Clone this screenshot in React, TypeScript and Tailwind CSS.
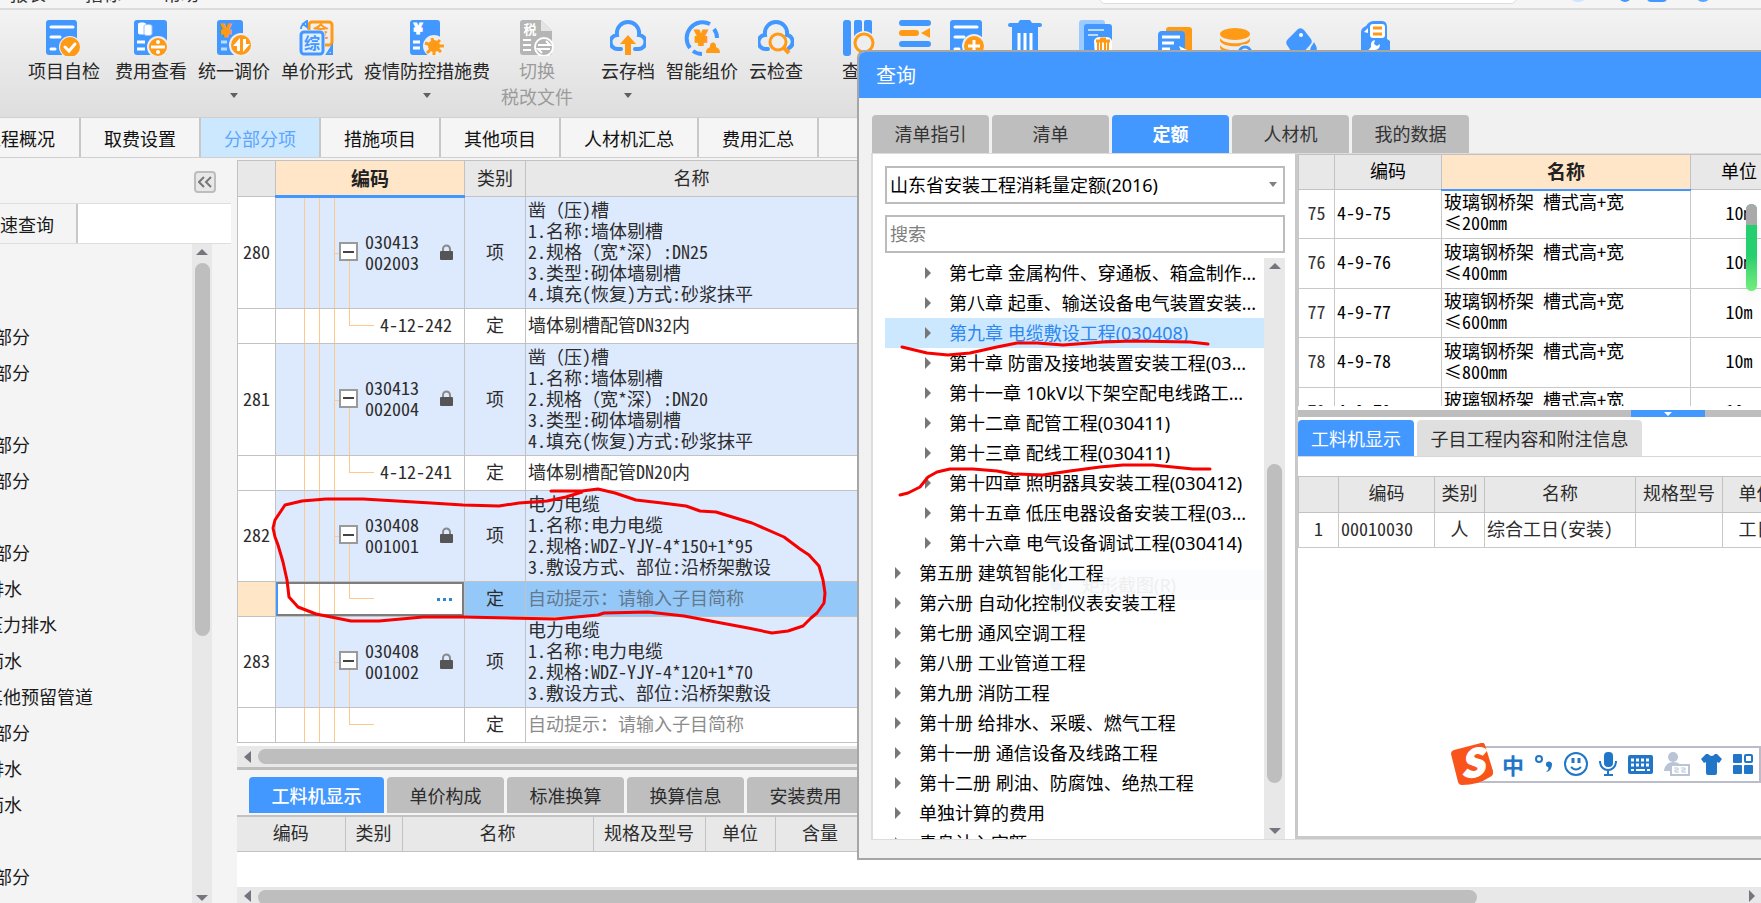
import type { ReactNode } from 'react';

const MONO = "font-['Noto_Sans_Mono_CJK_SC','Noto_Sans_CJK_SC',monospace]";

/* ---------- toolbar icons ---------- */

function Icon({ children }: { children: ReactNode }) {
  return (
    <svg width="36" height="36" viewBox="0 0 36 36" fill="none" className="shrink-0" aria-hidden="true">
      {children}
    </svg>
  );
}

const icons: Record<string, ReactNode> = {
  check: (
    <Icon>
      <rect width="31" height="35" rx="3" fill="#4398ff" />
      <path d="M5 7h22M5 17h9M5 29h4" stroke="#fff" strokeWidth="3" strokeLinecap="round" />
      <circle cx="24" cy="27" r="11" fill="#eee" />
      <circle cx="24" cy="27" r="10" fill="#ff9a17" />
      <path d="M19 27l4 4 6-7" stroke="#fff" strokeWidth="3" strokeLinecap="round" />
    </Icon>
  ),
  fee: (
    <Icon>
      <rect x="1" width="33" height="35" rx="3" fill="#4398ff" />
      <path d="M5 4c0-2 8-2 8 0v9c0 2-8 2-8 0z" fill="#fff" />
      <path d="M11 6c0-2 8-2 8 0v8c0 2-8 2-8 0z" fill="#fff" stroke="#8fc2ff" />
      <path d="M4 22h8M4 29h8" stroke="#fff" strokeWidth="3" />
      <circle cx="25" cy="27" r="11" fill="#eee" />
      <circle cx="25" cy="27" r="9" fill="#ff9a17" />
      <path d="M18 27h14" stroke="#fff" strokeWidth="3" />
      <circle cx="25" cy="22" r="2" fill="#fff" />
      <circle cx="25" cy="32" r="2" fill="#fff" />
    </Icon>
  ),
  adjust: (
    <Icon>
      <rect x="1" width="26" height="35" rx="3" fill="#4398ff" />
      <text x="10" y="17" fontSize="18" fontWeight="900" textAnchor="middle" fill="#ff9a17" stroke="#ff9a17">¥</text>
      <path d="M5 22h6M5 29h6" stroke="#bddbff" strokeWidth="3" />
      <circle cx="25" cy="25" r="12" fill="#eee" />
      <circle cx="25" cy="25" r="10" fill="#ff9a17" />
      <path d="M24 18v13h-3v-5h-4zM27 32V19h3v5h4z" fill="#fff" />
    </Icon>
  ),
  form: (
    <Icon>
      <rect x="10" y="2" width="23" height="23" rx="3" stroke="#ff9a17" strokeWidth="3" />
      <text x="22" y="17" fontSize="16" fontWeight="700" textAnchor="middle" fill="#ff9a17">金</text>
      <rect x="0" y="10" width="26" height="26" rx="4" fill="#eee" />
      <rect x="2" y="12" width="22" height="22" rx="3" stroke="#4398ff" strokeWidth="3" fill="#e3efff" />
      <text x="13" y="29" fontSize="16" fontWeight="700" textAnchor="middle" fill="#4398ff">综</text>
      <path d="M2 9c0-3 2-5 4-5M8 1v6l-4-3zM33 27c0 3-2 5-4 5M33 26v8h-5z" stroke="#4398ff" strokeWidth="2" />
    </Icon>
  ),
  virus: (
    <Icon>
      <rect x="1" width="30" height="35" rx="3" fill="#4398ff" />
      <text x="9" y="14" fontSize="15" fontWeight="900" textAnchor="middle" fill="#fff" stroke="#fff">¥</text>
      <path d="M4 22h7M4 28h7" stroke="#fff" strokeWidth="3" />
      <circle cx="25" cy="26" r="11" fill="#eee" />
      <circle cx="25" cy="26" r="6" fill="#ff9a17" />
      <path d="M25 26l-2-8M25 26l6-6M25 26h10M25 26l7 6M25 26v9M25 26l-7 7M25 26l-9-3" stroke="#ff9a17" strokeWidth="3" />
    </Icon>
  ),
  tax: (
    <Icon>
      <path d="M4 0h18l11 11v22a2 2 0 0 1-2 2H4a3 3 0 0 1-3-3V3a3 3 0 0 1 3-3z" fill="#b5b5b5" />
      <path d="M22 0l11 11H22z" fill="#e4e4e4" />
      <text x="11" y="14" fontSize="13" fontWeight="700" textAnchor="middle" fill="#fff">税</text>
      <path d="M4 20h8M4 25h8M4 30h8" stroke="#fff" strokeWidth="2" />
      <circle cx="25" cy="27" r="9" fill="#b5b5b5" stroke="#fff" strokeWidth="2" />
      <path d="M19 25h12l-4-4M31 29H19l4 4" stroke="#fff" strokeWidth="2" />
    </Icon>
  ),
  upload: (
    <Icon>
      <path d="M11 29H8a7 7 0 0 1-1-14C6 7 12 2 18 2s12 5 11 13a7 7 0 0 1-1 14h-3" stroke="#4398ff" strokeWidth="4" strokeLinecap="round" />
      <path d="M18 15l8 9h-5v11h-6V24h-5z" fill="#ff9a17" />
    </Icon>
  ),
  smart: (
    <Icon>
      <path d="M6 28A16 16 0 0 1 26 4M30 9a15 15 0 0 1 3 9M9 31a15 15 0 0 0 9 3" stroke="#4398ff" strokeWidth="4" />
      <text x="17" y="25" fontSize="20" fontWeight="900" textAnchor="middle" fill="#ff9a17" stroke="#ff9a17" strokeWidth="2">¥</text>
      <path d="M22 33c0-5 3-5 4-6-1-6 7-6 6 0 1 1 4 1 4 6z" fill="#ff9a17" />
    </Icon>
  ),
  cloudsearch: (
    <Icon>
      <path d="M10 29H8a7 7 0 0 1-1-14C6 7 12 2 18 2s12 5 11 13a7 7 0 0 1 2 13" stroke="#4398ff" strokeWidth="4" strokeLinecap="round" />
      <circle cx="20" cy="22" r="8" fill="#eee" stroke="#ff9a17" strokeWidth="3" />
      <path d="M25 27l6 6" stroke="#ff9a17" strokeWidth="4" />
    </Icon>
  ),
  books: (
    <Icon>
      <rect x="1" width="8" height="36" rx="3" fill="#4398ff" />
      <rect x="12" width="8" height="30" rx="2" fill="#4398ff" />
      <rect x="22" width="8" height="26" rx="2" fill="#4398ff" />
      <circle cx="22" cy="23" r="12" fill="#eee" />
      <circle cx="22" cy="23" r="9" stroke="#ff9a17" strokeWidth="3" />
    </Icon>
  ),
  indent: (
    <Icon>
      <path d="M5 3h26M5 24h26" stroke="#4398ff" strokeWidth="6" strokeLinecap="round" />
      <path d="M5 13h14" stroke="#ff9a17" strokeWidth="6" strokeLinecap="round" />
      <path d="M24 13l9-5v10z" fill="#ff9a17" />
    </Icon>
  ),
  add: (
    <Icon>
      <rect x="1" width="32" height="35" rx="3" fill="#4398ff" />
      <path d="M6 7h22M6 17h9M6 29h4" stroke="#fff" strokeWidth="3" strokeLinecap="round" />
      <circle cx="25" cy="26" r="12" fill="#eee" />
      <circle cx="25" cy="26" r="10" fill="#ff9a17" />
      <path d="M25 20v12M19 26h12" stroke="#fff" strokeWidth="3" />
    </Icon>
  ),
  trash: (
    <Icon>
      <path d="M13 0h10l2 3h8a2 2 0 0 1 0 4H3a2 2 0 0 1 0-4h8zM5 7h26v26a3 3 0 0 1-3 3H8a3 3 0 0 1-3-3z" fill="#4398ff" />
      <path d="M12 13v18M18 13v18M24 13v18" stroke="#fff" strokeWidth="3" />
    </Icon>
  ),
  copydel: (
    <Icon>
      <rect x="1" width="26" height="34" rx="3" fill="#9ccbff" />
      <rect x="6" y="4" width="28" height="32" rx="3" fill="#4398ff" />
      <path d="M10 10h16M10 15h10" stroke="#bddbff" strokeWidth="2" />
      <path d="M16 21q1-4 6-4h6q5 0 6 4v15H17z" fill="#fff" />
      <path d="M18 21h14M22 19h6" stroke="#ff9a17" strokeWidth="3" />
      <path d="M20 22v14M23 22v14M27 22v14M30 22v14" stroke="#ff9a17" strokeWidth="2" />
    </Icon>
  ),
  copy: (
    <Icon>
      <rect x="9" y="7" width="26" height="28" rx="3" fill="#ff9a17" />
      <rect x="1" y="11" width="27" height="25" rx="4" fill="#4398ff" />
      <path d="M5 17h18M5 23h12M5 29h8" stroke="#fff" strokeWidth="3" />
      <path d="M22 26l8 4-4 6z" fill="#fff" />
    </Icon>
  ),
  coins: (
    <Icon>
      <ellipse cx="17" cy="14" rx="15" ry="6" fill="#ff9a17" />
      <path d="M2 18c3 7 27 7 30 0v3c-3 7-27 7-30 0zM2 25c3 7 27 7 30 0v3c-3 7-27 7-30 0z" fill="#ff9a17" />
      <circle cx="27" cy="33" r="9" fill="#eee" />
      <circle cx="27" cy="33" r="6" stroke="#4398ff" strokeWidth="3" />
    </Icon>
  ),
  bucket: (
    <Icon>
      <path d="M5 19L15 9q3-2 6 1l7 9q2 3-1 6l-8 9H10L4 25q-2-3 1-6z" fill="#4398ff" />
      <circle cx="18" cy="15" r="2" fill="#fff" />
      <path d="M31 22c2 4 4 6 2 10h-5c-2-4 1-6 3-10z" fill="#4398ff" />
    </Icon>
  ),
  wrench: (
    <Icon>
      <path d="M3 12q0-4 5-6 3-5 8-5h8q5 0 5 6v12l3 2v16H3z" fill="#4398ff" />
      <rect x="12" y="4" width="15" height="14" rx="3" fill="#fff" />
      <path d="M15 8h9M15 14h9" stroke="#ff9a17" strokeWidth="3" />
      <path d="M7 34l6-7q-1-6 4-7l-1 4 3 2 3-2q0 6-6 6l-5 6z" fill="#fff" />
      <path d="M6 12l4-4v5z" fill="#fff" />
    </Icon>
  ),
};

type Tool = { icon: string; label: string; sub?: string; arrow?: boolean; off?: boolean };

const toolGroups: { cls: string; tools: Tool[] }[] = [
  { cls: 'ml-7', tools: [{ icon: 'check', label: '项目自检' }] },
  {
    cls: 'ml-[15px]',
    tools: [
      { icon: 'fee', label: '费用查看' },
      { icon: 'adjust', label: '统一调价', arrow: true },
      { icon: 'form', label: '单价形式' },
      { icon: 'virus', label: '疫情防控措施费', arrow: true },
      { icon: 'tax', label: '切换', sub: '税改文件', off: true },
    ],
  },
  {
    cls: 'ml-7',
    tools: [
      { icon: 'upload', label: '云存档', arrow: true },
      { icon: 'smart', label: '智能组价' },
      { icon: 'cloudsearch', label: '云检查' },
    ],
  },
  { cls: 'ml-[39px]', tools: [{ icon: 'books', label: '查询' }] },
];

const iconTools = [
  { icon: 'indent', name: '插入', cls: 'w-[52px]' },
  { icon: 'add', name: '补充', cls: 'w-[52px]' },
  { icon: 'trash', name: '删除', cls: 'w-16' },
  { icon: 'copydel', name: '清除', cls: 'w-[78px]' },
  { icon: 'copy', name: '复用', cls: 'w-20' },
  { icon: 'coins', name: '价格', cls: 'w-[42px]' },
  { icon: 'bucket', name: '颜色', cls: 'w-[88px]' },
  { icon: 'wrench', name: '工具', cls: 'w-[62px]' },
];

function Toolbar() {
  return (
    <div className="flex h-[109px] shrink-0 items-start overflow-hidden border-t-2 border-[#dcdcdc] bg-gradient-to-b from-[#f3f3f3] to-[#dedede] pt-[10px]">
      {toolGroups.map((g) => (
        <div key={g.tools[0].label} className={`flex shrink-0 gap-[11px] ${g.cls}`}>
          {g.tools.map((t) => (
            <button
              key={t.label}
              type="button"
              className={`flex flex-col items-center whitespace-nowrap text-lg leading-[26px] ${t.off ? 'text-[#9b9b9b]' : 'text-[#262626]'}`}
            >
              {icons[t.icon]}
              <span className="mt-px">{t.label}</span>
              {t.sub && <span>{t.sub}</span>}
              {t.arrow && <span className="mt-[10px] border-x-4 border-t-[5px] border-x-transparent border-t-[#606060]" />}
            </button>
          ))}
        </div>
      ))}
      <div className="ml-[11px] flex">
        {iconTools.map((t) => (
          <button key={t.icon} type="button" aria-label={t.name} className={`flex justify-center ${t.cls}`}>
            {icons[t.icon]}
          </button>
        ))}
      </div>
    </div>
  );
}

/* ---------- top strip and page tabs ---------- */

function TopStrip() {
  return (
    <div className="flex h-2 shrink-0 items-end overflow-hidden bg-[#f5f5f5] text-lg leading-[18px] text-[#333]">
      <span className="ml-[10px] pb-[6px]">报表</span>
      <span className="ml-[39px] pb-[6px]">指标</span>
      <span className="ml-[42px] pb-[6px]">帮助</span>
      <div className="mb-1 ml-[900px] flex h-8 w-[418px] shrink-0 items-end rounded-md border border-[#ddd] bg-white pl-7">
        <input
          aria-label="功能搜索"
          placeholder="请输入功能名称进行搜索"
          className="w-full bg-transparent leading-[18px] outline-none placeholder:text-[#999]"
        />
      </div>
      <div className="ml-[52px] flex items-end gap-4 pb-[6px]">
        <span className="h-4 w-[18px] rounded-full bg-[#cfe4ff]" />
        <span className="ml-4 h-4 w-3 rounded-full bg-[#4398ff]" />
        <span className="h-4 w-5 rounded bg-[#4398ff]" />
        <span className="ml-3 h-4 w-4 rounded-full bg-[#5aa5ff]" />
      </div>
    </div>
  );
}

const pageTabs = [
  { t: '取费设置', w: 'w-[120px]' },
  { t: '分部分项', w: 'w-[120px]' },
  { t: '措施项目', w: 'w-[120px]' },
  { t: '其他项目', w: 'w-[120px]' },
  { t: '人材机汇总', w: 'w-[138px]' },
  { t: '费用汇总', w: 'w-[120px]' },
];

function PageTabs() {
  return (
    <div className="flex h-[41px] shrink-0 border-y border-[#cfcfcf] bg-[#f5f5f5] text-lg text-[#111]">
      <button type="button" className="flex w-[81px] items-center justify-end overflow-hidden whitespace-nowrap border-r-2 border-[#c8c8c8] pr-6">
        工程概况
      </button>
      {pageTabs.map(({ t, w }) => (
        <button
          key={t}
          type="button"
          className={`${w} border-r-2 border-[#c8c8c8] ${t === '分部分项' ? 'bg-[#cce8ff] text-[#5ca6ff]' : ''}`}
        >
          {t}
        </button>
      ))}
    </div>
  );
}

/* ---------- left tree ---------- */

const sideItems = [
  ['', 'w-0'],
  ['', 'w-0'],
  ['部分', 'w-[30px]'],
  ['部分', 'w-[30px]'],
  ['', 'w-0'],
  ['部分', 'w-[30px]'],
  ['部分', 'w-[30px]'],
  ['', 'w-0'],
  ['部分', 'w-[30px]'],
  ['排水', 'w-[22px]'],
  ['压力排水', 'w-[57px]'],
  ['雨水', 'w-[22px]'],
  ['其他预留管道', 'w-[93px]'],
  ['部分', 'w-[30px]'],
  ['排水', 'w-[22px]'],
  ['雨水', 'w-[22px]'],
  ['', 'w-0'],
  ['部分', 'w-[30px]'],
];

function SidePanel() {
  return (
    <aside className="flex w-[231px] shrink-0 flex-col bg-[#f4f4f4] text-lg text-[#1a1a1a]">
      <div className="flex h-11 shrink-0 items-center justify-end border-b border-[#dedede] pr-[15px]">
        <button type="button" aria-label="收起" className="flex h-[22px] w-[22px] items-center justify-center rounded border-2 border-[#bdbdbd] bg-[#e8e8e8]">
          <svg width="14" height="12" viewBox="0 0 14 12" fill="none" stroke="#777" strokeWidth="2">
            <path d="M6 1L1 6l5 5M13 1L8 6l5 5" />
          </svg>
        </button>
      </div>
      <div className="flex h-10 shrink-0 border-b border-[#dedede] bg-white">
        <button type="button" className="flex w-[78px] items-center justify-end overflow-hidden whitespace-nowrap border-r-2 border-[#c8c8c8] bg-[#f4f4f4] pr-[22px]">
          快速查询
        </button>
      </div>
      <div className="flex min-h-0 flex-1 justify-between">
        <div className="overflow-hidden pt-[2px]">
          {sideItems.map(([t, w], i) => (
            <div key={i} className={`flex h-9 items-center justify-end overflow-hidden whitespace-nowrap ${w}`}>
              {t}
            </div>
          ))}
        </div>
        <div className="mr-[19px] flex w-5 flex-col items-center bg-[#e8e8e8] pt-[5px]">
          <span className="border-x-[6px] border-b-[6px] border-x-transparent border-b-[#75757f]" />
          <span className="mt-2 h-[373px] w-[15px] rounded-full bg-[#bebebe]" />
          <span className="mb-[2px] mt-auto border-x-[6px] border-t-[6px] border-x-transparent border-t-[#75757f]" />
        </div>
      </div>
    </aside>
  );
}

/* ---------- main bill grid ---------- */

type Bill = { no: string; code: [string, string]; lines: string[]; child?: string; childName?: string; active?: boolean };

const bills: Bill[] = [
  {
    no: '280',
    code: ['030413', '002003'],
    lines: ['凿（压)槽', '1.名称:墙体剔槽', '2.规格（宽*深）:DN25', '3.类型:砌体墙剔槽', '4.填充(恢复)方式:砂浆抹平'],
    child: '4-12-242',
    childName: '墙体剔槽配管DN32内',
  },
  {
    no: '281',
    code: ['030413', '002004'],
    lines: ['凿（压)槽', '1.名称:墙体剔槽', '2.规格（宽*深）:DN20', '3.类型:砌体墙剔槽', '4.填充(恢复)方式:砂浆抹平'],
    child: '4-12-241',
    childName: '墙体剔槽配管DN20内',
  },
  {
    no: '282',
    code: ['030408', '001001'],
    lines: ['电力电缆', '1.名称:电力电缆', '2.规格:WDZ-YJY-4*150+1*95', '3.敷设方式、部位:沿桥架敷设'],
    active: true,
  },
  {
    no: '283',
    code: ['030408', '001002'],
    lines: ['电力电缆', '1.名称:电力电缆', '2.规格:WDZ-YJY-4*120+1*70', '3.敷设方式、部位:沿桥架敷设'],
  },
];

function Guides() {
  return (
    <>
      <span className="absolute inset-y-0 left-7 w-px bg-[#fcc98f]" />
      <span className="absolute inset-y-0 left-[43px] w-px bg-[#fcc98f]" />
      <span className="absolute inset-y-0 left-[58px] w-px bg-[#fcc98f]" />
    </>
  );
}

function Lock() {
  return (
    <svg width="13" height="16" viewBox="0 0 13 16" fill="none" className="ml-auto">
      <path d="M3 8V5a3 3 0 0 1 7 0V8" stroke="#8a8a8a" strokeWidth="2" />
      <rect y="7" width="13" height="9" rx="1" fill="#555" />
    </svg>
  );
}

function BillRows({ b }: { b: Bill }) {
  const cell = 'border border-[#c2c2c2] pb-[3px]';
  return (
    <>
      <tr className={b.lines.length === 5 ? 'h-28' : 'h-[91px]'}>
        <td className={`${cell} bg-white text-center`}>{b.no}</td>
        <td className={`${cell} relative bg-[#dde9fd]`}>
          <Guides />
          <span className="absolute left-[58px] top-1/2 h-px w-[6px] bg-[#fcc98f]" />
          <span className="absolute bottom-0 left-[73px] top-1/2 w-px bg-[#fcc98f]" />
          <div className="relative flex items-center pl-[63px] pr-[11px]">
            <button type="button" aria-label="折叠" className="flex h-[19px] w-[19px] items-center justify-center border-2 border-[#9a9a9a] bg-white">
              <span className="h-[2px] w-[11px] bg-[#444]" />
            </button>
            <span className="ml-[7px]">
              {b.code[0]}
              <br />
              {b.code[1]}
            </span>
            <Lock />
          </div>
        </td>
        <td className={`${cell} bg-[#dde9fd] text-center`}>项</td>
        <td className={`${cell} whitespace-nowrap bg-[#dde9fd] pl-[2px]`}>
          {b.lines.map((l) => (
            <div key={l}>{l}</div>
          ))}
        </td>
      </tr>
      <tr className="h-[35px]">
        <td className={`${cell} ${b.active ? 'bg-[#ffe6c6]' : 'bg-white'}`} />
        <td className={`${cell} relative bg-white`}>
          <Guides />
          <span className="absolute left-[73px] top-0 h-1/2 w-[25px] border-b border-l border-[#fcc98f]" />
          {b.active && (
            <span className="absolute inset-0 border-2 border-[#7d7d7d] border-l-[#4398ff]">
              <button type="button" aria-label="选择子目" className="absolute inset-y-0 right-[10px] flex items-center gap-[3px]">
                <i className="h-[3px] w-[3px] bg-[#2f86d8]" />
                <i className="h-[3px] w-[3px] bg-[#2f86d8]" />
                <i className="h-[3px] w-[3px] bg-[#2f86d8]" />
              </button>
            </span>
          )}
          {b.child && <div className="relative pl-[104px]">{b.child}</div>}
        </td>
        <td className={`${cell} text-center ${b.active ? 'bg-[#93c8f8]' : 'bg-white'}`}>定</td>
        <td className={`${cell} whitespace-nowrap pl-[2px] ${b.active ? 'bg-[#93c8f8] text-[#63798f]' : b.childName ? 'bg-white' : 'bg-white text-[#8c8c8c]'}`}>
          {b.childName ?? '自动提示：请输入子目简称'}
        </td>
      </tr>
    </>
  );
}

function BillGrid() {
  const th = 'border border-[#c2c2c2] bg-[#e8e8e8] pb-[3px] font-normal';
  return (
    <div className="h-[586px] shrink-0 overflow-hidden bg-white">
      <table className={`w-[621px] table-fixed border-collapse text-lg leading-[21px] text-[#2c2c2c] ${MONO}`}>
        <colgroup>
          <col className="w-[38px]" />
          <col className="w-[189px]" />
          <col className="w-[61px]" />
          <col />
        </colgroup>
        <thead>
          <tr className="h-9">
            <th className={th} aria-label="序号" />
            <th className="border border-b-[3px] border-[#c2c2c2] border-b-[#4398ff] bg-[#ffe6c8] pb-[2px] text-[19px] font-bold text-[#222]">编码</th>
            <th className={th}>类别</th>
            <th className={th}>名称</th>
          </tr>
        </thead>
        <tbody>
          {bills.map((b) => (
            <BillRows key={b.no} b={b} />
          ))}
        </tbody>
      </table>
    </div>
  );
}

function LeftArrow() {
  return <span className="mx-[7px] border-y-[6px] border-r-[7px] border-y-transparent border-r-[#75757f]" />;
}

const detailCols = [
  ['编码', 'w-[108px]'],
  ['类别', 'w-[57px]'],
  ['名称', 'w-[191px]'],
  ['规格及型号', 'w-28'],
  ['单位', 'w-[70px]'],
  ['含量', 'w-[90px]'],
];

function MainArea() {
  return (
    <main className="ml-[6px] flex min-w-0 flex-1 flex-col bg-white">
      <BillGrid />
      <div className="flex h-[21px] shrink-0 items-center bg-[#e8e8e8]">
        <LeftArrow />
        <span className="h-[15px] flex-1 rounded-l-full bg-[#bebebe]" />
      </div>
      <div className="h-[3px] shrink-0 bg-[#bebebe]" />
      <div className="flex h-[45px] shrink-0 items-start gap-[3px] bg-[#f4f4f4] pl-3 pt-[7px] text-lg text-[#2c2c2c]">
        <button type="button" className="h-9 w-[135px] rounded-t bg-[#4398ff] font-medium text-white">工料机显示</button>
        {['单价构成', '标准换算', '换算信息', '安装费用'].map((t) => (
          <button key={t} type="button" className="h-9 w-[117px] rounded-t bg-[#bebebe]">
            {t}
          </button>
        ))}
      </div>
      <table className="w-[628px] shrink-0 table-fixed border-collapse text-lg text-[#2c2c2c]">
        <thead>
          <tr className="h-[35px]">
            {detailCols.map(([t, w]) => (
              <th key={t} className={`${w} whitespace-nowrap border border-l-0 border-t-2 border-[#c2c2c2] bg-[#e8e8e8] pb-[3px] font-normal leading-6`}>
                {t}
              </th>
            ))}
          </tr>
        </thead>
      </table>
      <div className="flex-1" />
      <div className="flex h-4 shrink-0 items-start overflow-hidden bg-[#e8e8e8] pt-[3px]">
        <LeftArrow />
        <span className="h-[15px] w-4/5 rounded-full bg-[#bebebe]" />
        <span className="ml-auto mr-[6px] border-y-[6px] border-l-[6px] border-y-transparent border-l-[#75757f]" />
      </div>
    </main>
  );
}

/* ---------- query dialog ---------- */

const chapters: { t: string; top?: boolean; on?: boolean }[] = [
  { t: '第七章 金属构件、穿通板、箱盒制作...' },
  { t: '第八章 起重、输送设备电气装置安装...' },
  { t: '第九章 电缆敷设工程(030408)', on: true },
  { t: '第十章 防雷及接地装置安装工程(03...' },
  { t: '第十一章 10kV以下架空配电线路工...' },
  { t: '第十二章 配管工程(030411)' },
  { t: '第十三章 配线工程(030411)' },
  { t: '第十四章 照明器具安装工程(030412)' },
  { t: '第十五章 低压电器设备安装工程(03...' },
  { t: '第十六章 电气设备调试工程(030414)' },
  { t: '第五册 建筑智能化工程', top: true },
  { t: '第六册 自动化控制仪表安装工程', top: true },
  { t: '第七册 通风空调工程', top: true },
  { t: '第八册 工业管道工程', top: true },
  { t: '第九册 消防工程', top: true },
  { t: '第十册 给排水、采暖、燃气工程', top: true },
  { t: '第十一册 通信设备及线路工程', top: true },
  { t: '第十二册 刷油、防腐蚀、绝热工程', top: true },
  { t: '单独计算的费用', top: true },
  { t: '青岛计入定额', top: true },
];

function QuotaTree() {
  return (
    <div className="flex w-[424px] shrink-0 flex-col border-l-2 border-[#dcdcdc] bg-white pl-3 pr-[10px] pt-3 font-['Noto_Sans','Noto_Sans_CJK_SC',sans-serif] text-lg text-black">
      <div className="relative mb-[11px] h-[38px] shrink-0">
        <select aria-label="定额库" className="h-full w-full appearance-none rounded-none border-2 border-[#bcbcbc] bg-white px-[3px]">
          <option>山东省安装工程消耗量定额(2016)</option>
        </select>
        <span className="pointer-events-none absolute right-2 top-4 border-x-4 border-t-[5px] border-x-transparent border-t-[#808080]" />
      </div>
      <input aria-label="搜索" placeholder="搜索" className="h-[38px] shrink-0 border-2 border-[#bcbcbc] px-[3px] outline-none placeholder:text-[#808080]" />
      <div className="mt-[5px] flex min-h-0 flex-1">
        <div className="relative min-w-0 flex-1 overflow-hidden">
          <div className="pointer-events-none absolute left-[155px] right-0 top-[312px] flex h-[30px] items-center gap-5 bg-[#fafcfe] text-[#efefef]">
            <span className="ml-[10px] h-3 w-3 rounded-full bg-[#f1f5fa]" />
            <span>矩形截图(R)</span>
          </div>
          {chapters.map((c) => (
            <div
              key={c.t}
              className={`relative flex h-[30px] items-center whitespace-nowrap ${c.top ? 'pl-[10px]' : 'pl-10'} ${c.on ? 'bg-[#cce8ff] text-[#2d87f0]' : ''}`}
            >
              <span className="mr-[18px] border-y-[6px] border-l-[6px] border-y-transparent border-l-[#777]" />
              {c.t}
            </div>
          ))}
        </div>
        <div className="flex w-[21px] flex-col items-center bg-[#e8e8e8] pt-[5px]">
          <span className="border-x-[6px] border-b-[6px] border-x-transparent border-b-[#75757f]" />
          <span className="mt-[195px] h-[319px] w-[15px] rounded-full bg-[#bebebe]" />
          <span className="mb-[5px] mt-auto border-x-[6px] border-t-[6px] border-x-transparent border-t-[#75757f]" />
        </div>
      </div>
    </div>
  );
}

const quotas = [
  ['75', '200'],
  ['76', '400'],
  ['77', '600'],
  ['78', '800'],
  ['79', '1000'],
];

function QuotaDetail() {
  const th = 'border border-[#c2c2c2] bg-[#e8e8e8] pb-1 font-normal';
  const td = 'border border-[#c9c9c9] pb-1';
  return (
    <div className="flex min-w-0 flex-1 flex-col overflow-hidden border-b-[3px] border-l-[3px] border-[#c9c9c9] bg-white text-lg text-black">
      <div className="h-[252px] shrink-0 overflow-hidden">
        <table className={`w-[489px] table-fixed border-collapse leading-[21px] ${MONO}`}>
          <colgroup>
            <col className="w-[36px]" />
            <col className="w-[107px]" />
            <col className="w-[249px]" />
            <col className="w-[97px]" />
          </colgroup>
          <thead>
            <tr className="h-[35px]">
              <th className={th} aria-label="序号" />
              <th className={th}>编码</th>
              <th className="border border-b-2 border-[#c2c2c2] border-b-[#4398ff] bg-[#ffe6c8] pb-[3px] text-[19px] font-bold text-[#222]">名称</th>
              <th className={th}>单位</th>
            </tr>
          </thead>
          <tbody>
            {quotas.map(([n, size]) => (
              <tr key={n} className="odd:h-[49px] even:h-[50px]">
                <td className={`${td} text-center text-[#333]`}>{n}</td>
                <td className={`${td} pl-[2px]`}>4-9-{n}</td>
                <td className={`${td} pl-[2px]`}>
                  玻璃钢桥架 槽式高+宽
                  <br />
                  ≤{size}mm
                </td>
                <td className={`${td} text-center`}>10m</td>
              </tr>
            ))}
          </tbody>
        </table>
      </div>
      <div className="mt-1 flex h-[7px] shrink-0 justify-end bg-[#bebebe] pr-14">
        <button type="button" aria-label="收起明细" className="flex w-[74px] items-center justify-center bg-[#4398ff]">
          <span className="border-x-4 border-t-4 border-x-transparent border-t-white" />
        </button>
      </div>
      <div className="mt-[3px] flex h-[37px] shrink-0 gap-[3px] border-b border-[#d8d8d8]">
        <button type="button" className="w-[116px] rounded-t bg-[#4398ff] text-white">工料机显示</button>
        <button type="button" className="w-[225px] rounded-t bg-[#dfdfdf] text-[#2c2c2c]">子目工程内容和附注信息</button>
      </div>
      <table className={`mt-[19px] w-[492px] table-fixed border-collapse leading-[21px] text-[#2c2c2c] ${MONO}`}>
        <colgroup>
          <col className="w-[40px]" />
          <col className="w-[96px]" />
          <col className="w-[50px]" />
          <col className="w-[151px]" />
          <col className="w-[87px]" />
          <col className="w-[68px]" />
        </colgroup>
        <thead>
          <tr className="h-9">
            <th className={th} aria-label="序号" />
            <th className={th}>编码</th>
            <th className={th}>类别</th>
            <th className={th}>名称</th>
            <th className={th}>规格型号</th>
            <th className={th}>单位</th>
          </tr>
        </thead>
        <tbody>
          <tr className="h-[35px]">
            <td className={`${td} text-center`}>1</td>
            <td className={`${td} pl-[2px]`}>00010030</td>
            <td className={`${td} text-center`}>人</td>
            <td className={`${td} pl-[2px]`}>综合工日(安装)</td>
            <td className={td} />
            <td className={`${td} text-center`}>工日</td>
          </tr>
        </tbody>
      </table>
    </div>
  );
}

function QueryDialog() {
  return (
    <section className="absolute bottom-[43px] left-[857px] right-0 top-[50px] flex flex-col overflow-hidden rounded-tl-lg border-2 border-r-0 border-[#a6a6a6] bg-[#f1f1f1]">
      <h2 className="flex h-[46px] shrink-0 items-center bg-[#4398ff] pl-[17px] text-xl text-white">查询</h2>
      <div className="flex h-[55px] shrink-0 items-end gap-[3px] pl-[13px] text-lg text-[#333]">
        {['清单指引', '清单', '定额', '人材机', '我的数据'].map((t) => (
          <button
            key={t}
            type="button"
            className={`h-[38px] w-[117px] rounded-t pb-[3px] ${t === '定额' ? 'bg-[#4398ff] font-bold text-white' : 'bg-[#bebebe]'}`}
          >
            {t}
          </button>
        ))}
      </div>
      <div className="mb-[18px] ml-3 flex min-h-0 flex-1 border-y border-[#dcdcdc]">
        <QuotaTree />
        <QuotaDetail />
      </div>
    </section>
  );
}

/* ---------- floating items ---------- */

function ImeBar() {
  return (
    <div className="absolute right-0 top-[743px] flex h-[42px] w-[310px] items-center text-[#2176c7]">
      <svg width="42" height="42" viewBox="0 0 42 42" className="relative z-10 shrink-0">
        <path d="M3 7L30 0q3-1 4 2l8 26q1 4-3 6-12 8-28 8-3 0-4-3L0 11q0-3 3-4z" fill="#f9541c" />
        <text x="21" y="34" fontSize="38" fontWeight="900" fontStyle="italic" textAnchor="middle" fill="#fff" stroke="#fff" transform="rotate(-6 21 21)">S</text>
      </svg>
      <div className="-ml-6 flex h-[37px] flex-1 items-center justify-between border-2 border-[#bcbcc8] bg-white pl-[31px] pr-[6px]">
        <span className="text-[22px] font-bold leading-none">中</span>
        <svg width="18" height="20" viewBox="0 0 18 20" fill="none">
          <circle cx="4" cy="5" r="3" stroke="currentColor" strokeWidth="2" />
          <path d="M11 11a3 3 0 0 1 6-1c0 5-3 8-6 8 2-2 3-3 2-5-1 0-2-1-2-2z" fill="currentColor" />
        </svg>
        <svg width="24" height="24" viewBox="0 0 24 24" fill="none" stroke="currentColor" strokeWidth="2">
          <circle cx="12" cy="12" r="11" />
          <path d="M9 6v5M15 6v5" strokeWidth="3" />
          <path d="M7 15q5 5 10 0" />
        </svg>
        <svg width="18" height="24" viewBox="0 0 18 24" fill="none">
          <rect x="5" width="9" height="15" rx="4" fill="currentColor" />
          <path d="M1 9c0 12 16 12 16 0M9 18v4M5 23h9" stroke="currentColor" strokeWidth="2" />
        </svg>
        <svg width="25" height="19" viewBox="0 0 25 19">
          <rect width="25" height="19" rx="2" fill="currentColor" />
          <path d="M3 5h20M3 10h20" stroke="#fff" strokeWidth="3" strokeDasharray="3 2" />
          <path d="M3 15h3M8 15h9M19 15h3" stroke="#fff" strokeWidth="2" />
        </svg>
        <svg width="26" height="24" viewBox="0 0 26 24" fill="#b9c4d6">
          <circle cx="9" cy="5" r="5" />
          <path d="M0 18q2-8 9-8t8 5v4H0z" />
          <rect x="7" y="13" width="18" height="10" fill="#fff" stroke="#b9c4d6" strokeWidth="2" />
          <path d="M10 16h4v2h-3v2h4M17 16h4v2h-3v2h4" fill="none" stroke="#b9c4d6" />
        </svg>
        <svg width="21" height="21" viewBox="0 0 21 21" fill="currentColor">
          <path d="M5 0h2q4 4 7 0h2l5 5-3 4-2-1v11q0 2-2 2H7q-2 0-2-2V8L3 9 0 5z" />
        </svg>
        <svg width="20" height="20" viewBox="0 0 20 20" fill="currentColor">
          <rect width="9" height="9" rx="1" />
          <rect y="11" width="9" height="9" rx="1" />
          <rect x="11" y="11" width="9" height="9" rx="1" />
          <rect x="12" y="1" width="7" height="7" rx="1" fill="none" stroke="currentColor" strokeWidth="2" />
        </svg>
      </div>
    </div>
  );
}

// hand-drawn red pen marks
function PenMarks() {
  return (
    <svg className="pointer-events-none absolute left-0 top-0" width="1300" height="700" viewBox="0 0 1300 700" fill="none" stroke="#f60000" strokeWidth="3" strokeLinecap="round" strokeLinejoin="round">
      <path d="M551 491L582 491L598 489L615 493L636 500L662 503L686 506L700 511L716 512L752 523L784 537L800 549L809 555L819 566L823 580L825 593L824 603L817 613L811 618L803 626L788 631L772 633L748 628L684 616L648 612L604 613L598 615L555 619L463 617L423 617L379 621L351 621L316 614L298 607L289 597L287 580L283 562L278 545L275 537L273 528L275 520L285 505L302 501L326 499L363 499L431 503L463 505L499 506L519 503L547 501L566 497L582 492" />
      <path d="M902 347L927 353L948 355L970 353L997 347L1017 343L1037 343L1063 345L1103 342L1133 341L1190 342L1208 344" />
      <path d="M900 495L908 493L920 487L928 477L937 472L950 469L973 469L997 471L1013 474L1043 475L1070 471L1100 467L1123 465L1153 465L1193 469L1210 469" />
    </svg>
  );
}

export default function App() {
  return (
    <div className="relative flex h-screen flex-col overflow-hidden bg-[#f4f4f4] font-['Noto_Sans_CJK_SC',sans-serif]">
      <TopStrip />
      <Toolbar />
      <PageTabs />
      <div className="mt-[2px] flex min-h-0 flex-1">
        <SidePanel />
        <MainArea />
      </div>
      <QueryDialog />
      <div className="absolute right-1 top-[204px] flex h-[87px] w-[11px] flex-col overflow-hidden rounded-full bg-gradient-to-b from-[#25cf6f] from-60% to-[#71ee7c] shadow-lg">
        <span className="h-[21px] bg-[#a9a9a9]" />
      </div>
      <ImeBar />
      <PenMarks />
    </div>
  );
}
